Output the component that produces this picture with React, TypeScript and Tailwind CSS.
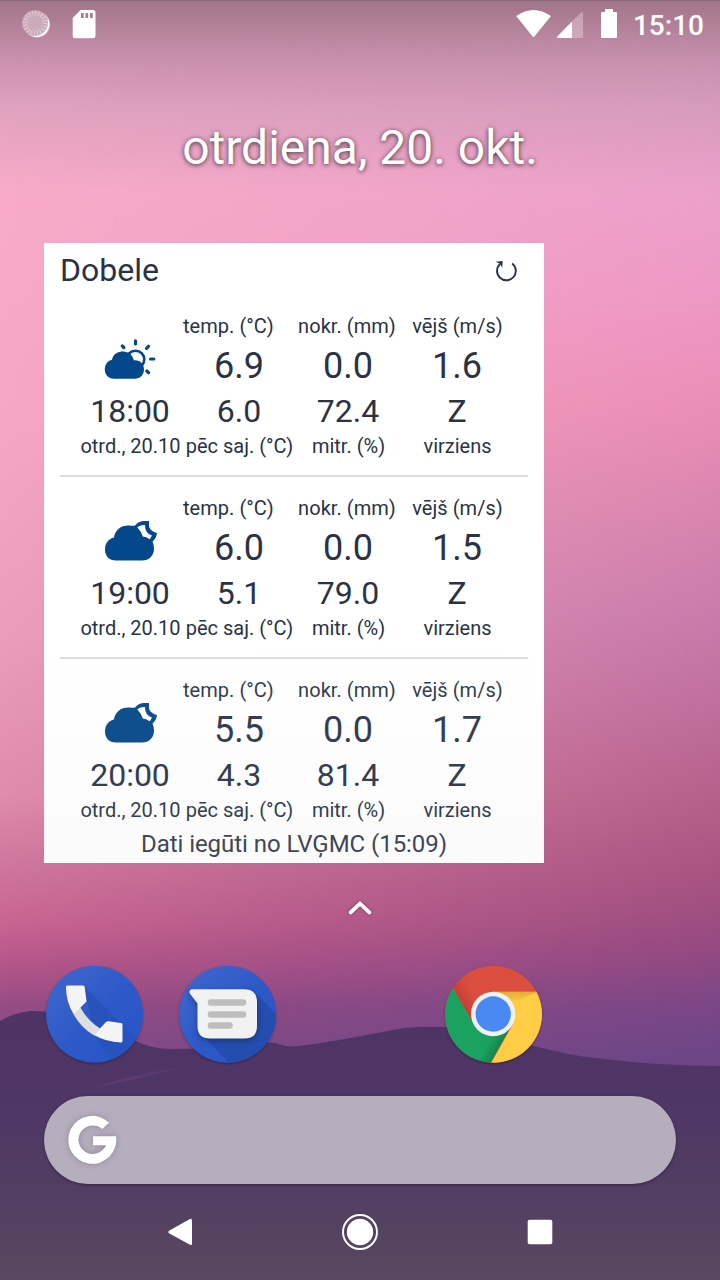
import React from "react";

type Forecast = {
  time: string;
  night: boolean;
  temp: string;
  feels: string;
  rain: string;
  humidity: string;
  wind: string;
  tone: string;
  iconTone: string;
};

const forecasts: Forecast[] = [
  { time: "18:00", night: false, temp: "6.9", feels: "6.0", rain: "0.0", humidity: "72.4", wind: "1.6", tone: "text-[#293345]", iconTone: "text-[#04478b]" },
  { time: "19:00", night: true, temp: "6.0", feels: "5.1", rain: "0.0", humidity: "79.0", wind: "1.5", tone: "text-[#293345]", iconTone: "text-[#04478b]" },
  { time: "20:00", night: true, temp: "5.5", feels: "4.3", rain: "0.0", humidity: "81.4", wind: "1.7", tone: "text-[#343e4e]", iconTone: "text-[#0f4f90]" },
];

function Wallpaper() {
  return (
    <svg className="absolute inset-0 h-full w-full" viewBox="0 0 720 1280">
      <defs>
        <linearGradient id="skyLeft" gradientUnits="userSpaceOnUse" x1="0" y1="0" x2="0" y2="1060">
          <stop offset="0" stopColor="#a17589" />
          <stop offset="0.057" stopColor="#cb91ae" />
          <stop offset="0.1" stopColor="#dfa2bf" />
          <stop offset="0.18" stopColor="#f8abc8" />
          <stop offset="0.4" stopColor="#f6a6c3" />
          <stop offset="0.6" stopColor="#eb9db9" />
          <stop offset="0.75" stopColor="#e08cab" />
          <stop offset="0.8" stopColor="#d27ca1" />
          <stop offset="0.87" stopColor="#c96591" />
          <stop offset="0.91" stopColor="#b4568a" />
          <stop offset="0.95" stopColor="#954c83" />
          <stop offset="1" stopColor="#824a88" />
        </linearGradient>
        <linearGradient id="skyRight" gradientUnits="userSpaceOnUse" x1="0" y1="0" x2="0" y2="1060">
          <stop offset="0" stopColor="#a17589" />
          <stop offset="0.057" stopColor="#c890ae" />
          <stop offset="0.1" stopColor="#d69bbb" />
          <stop offset="0.18" stopColor="#eba0ca" />
          <stop offset="0.28" stopColor="#ee98c4" />
          <stop offset="0.38" stopColor="#eb8eb7" />
          <stop offset="0.48" stopColor="#d985ae" />
          <stop offset="0.58" stopColor="#c87bab" />
          <stop offset="0.66" stopColor="#c06f9e" />
          <stop offset="0.75" stopColor="#b5608a" />
          <stop offset="0.82" stopColor="#a95482" />
          <stop offset="0.89" stopColor="#964a80" />
          <stop offset="0.95" stopColor="#7a4687" />
          <stop offset="1" stopColor="#6b4687" />
        </linearGradient>
        <linearGradient id="across" x1="0" y1="0" x2="1" y2="0">
          <stop offset="0" stopColor="#000" />
          <stop offset="1" stopColor="#fff" />
        </linearGradient>
        <mask id="rightFade">
          <rect width="720" height="1280" fill="url(#across)" />
        </mask>
        <linearGradient id="ground" gradientUnits="userSpaceOnUse" x1="0" y1="1010" x2="0" y2="1280">
          <stop offset="0" stopColor="#4e3464" />
          <stop offset="0.33" stopColor="#4e3666" />
          <stop offset="0.7" stopColor="#523f62" />
          <stop offset="1" stopColor="#5a4860" />
        </linearGradient>
      </defs>
      <rect width="720" height="1280" fill="url(#skyLeft)" />
      <rect width="720" height="1280" fill="url(#skyRight)" mask="url(#rightFade)" />
      <rect width="720" height="1" fill="#8a6679" />
      <path
        fill="url(#ground)"
        d="M0 1021 C12 1014 24 1011 34 1011 C70 1011 105 1027 138 1042 Q153 1049 170 1049 L235 1048 Q262 1041 276 1043 Q285 1047 294 1046.500 C335 1042 370 1034 404 1028 Q425 1026 446 1027 C490 1031 515 1042 544 1048.500 Q580 1057 600 1058.500 Q660 1066 720 1066 V1280 H0Z"
      />
      <path d="M90 1089 Q130 1074 180 1068 Q135 1080 90 1089Z" fill="#633d76" opacity=".7" />
    </svg>
  );
}

function StatusBar() {
  return (
    <header className="flex h-12 items-center justify-between pr-4 pl-5">
      <svg className="h-8 w-20" viewBox="20 8 80 32">
        <circle cx="37" cy="24.500" r="13" fill="#fff" fillOpacity=".55" />
        <path d="M47.500 17.500A13 13 0 0 1 31 36A14.500 14.500 0 0 0 47.500 17.500Z" fill="#fff" />
        <circle cx="35" cy="23" r="12.800" fill="#cbabba" />
        <circle cx="35" cy="23" r="10" fill="none" stroke="#fff" strokeOpacity=".4" strokeWidth="5" strokeDasharray="1.100 2.041" />
        <path d="M80.500 10H93Q95.500 10 95.500 12.500V36Q95.500 38.300 93 38.300H75Q72.700 38.300 72.700 36V18Z" fill="#fff" />
        <path d="M81 13h2.700v5H81zM85.500 13h2.700v5h-2.700zM90 13h2.700v5H90z" fill="#a77d92" />
      </svg>
      <div className="flex items-center">
        <svg className="h-8 w-[104px]" viewBox="515 8 104 32">
          <path d="M516.200 16Q525 10 533.500 10T551 16L534.700 36Q533.500 38 532.200 36Z" fill="#fff" />
          <path d="M583 13V37Q583 38 582 38H558Q556.500 37.500 557.500 36.200L581 12.500Q582.500 11.500 583 13Z" fill="#fff" fillOpacity=".3" />
          <path d="M572 21.500V38H558Q556.500 37.500 557.500 36.200Z" fill="#fff" />
          <path d="M605 9h8v3h3q1 0 1 1v24q0 1-1 1h-14q-1 0-1-1V13q0-1 1-1h3z" fill="#fff" />
        </svg>
        <span className="ml-[14px] pt-[3px] text-[28px] leading-8 font-medium text-white">15:10</span>
      </div>
    </header>
  );
}

function WeatherIcon({ night, tone }: { night: boolean; tone: string }) {
  return (
    <svg className={`h-[44px] w-[56px] ${tone}`} viewBox="102 337 56 44">
      {night ? (
        <>
          <path
            d="M116 378.500C109 378.500 105 374 105 367.500C105 361 109 356.500 114 355.500C115 348 121 343.500 128 343.500C132 343.500 134.500 344.200 135 343.500C138 340 141 339 144 339H149V341.500Q148.500 345 150.500 347.500Q153 350 157 351Q156.500 356 152.500 359.500Q154 363 154 366.500C154 374 149 378.500 142 378.500Z"
            fill="currentColor"
          />
          <path
            d="M137.300 345.300Q141 342.600 145 343Q144.800 347.500 147 350.200Q149 352.600 152 353.600Q151 355.800 149.500 357.200Q146.500 354.600 142.800 354.400Q141.200 349.500 137.300 345.300Z"
            fill="#fff"
          />
        </>
      ) : (
        <>
          <circle cx="135.500" cy="359.500" r="8.800" fill="#fff" stroke="currentColor" strokeWidth="2.600" />
          <path
            d="M135.500 340.800V344M146.500 348.300L148.500 346.300M150.500 359H153.800M146.800 371L148.600 372.700M122.300 346L123.900 347.600"
            stroke="currentColor"
            strokeWidth="3.200"
            strokeLinecap="round"
          />
          <path
            d="M114 378.700C108 378.700 104.800 374.500 104.800 369.500C104.800 364.500 108 360.500 112 359.800C113 354 118 351.500 123 351.500C129 351.500 133 355.500 133.800 360.300C140 359.500 144 364 144 369.500C144 375 140 378.700 135 378.700Z"
            fill="currentColor"
          />
        </>
      )}
    </svg>
  );
}

type MetricProps = { top: string; main: string; second: string; bottom: string; labelClass: string };

function Metric({ top, main, second, bottom, labelClass }: MetricProps) {
  return (
    <div className="flex w-[109px] flex-col items-center whitespace-nowrap">
      <span className={`text-[20px] leading-7 tracking-[0.05px] ${labelClass}`}>{top}</span>
      <span className="text-[36px] leading-[52px]">{main}</span>
      <span className="text-[32px] leading-[38px]">{second}</span>
      <span className="ml-[1px] text-[20px] leading-8">{bottom}</span>
    </div>
  );
}

function ForecastRow({ f }: { f: Forecast }) {
  return (
    <div className={`flex h-[150px] pl-[15.5px] ${f.tone}`}>
      <div className="flex w-[109px] flex-col items-center whitespace-nowrap">
        <div className="flex h-20 items-start pt-[25px]">
          <WeatherIcon night={f.night} tone={f.iconTone} />
        </div>
        <span className="text-[32px] leading-[38px]">{f.time}</span>
        <span className="ml-[1px] text-[20px] leading-8">otrd., 20.10</span>
      </div>
      <Metric top="temp. (°C)" main={f.temp} second={f.feels} bottom="pēc saj. (°C)" labelClass="-ml-[1.5px] self-start" />
      <Metric top="nokr. (mm)" main={f.rain} second={f.humidity} bottom="mitr. (%)" labelClass="mr-[2px]" />
      <Metric top="vējš (m/s)" main={f.wind} second="Z" bottom="virziens" labelClass="ml-[1px]" />
    </div>
  );
}

function WeatherWidget() {
  return (
    <section className="ml-11 flex h-[620px] w-[500px] flex-col bg-linear-to-b from-white from-65% to-[#fbfbfc] px-4">
      <div className="flex h-[54px] items-center justify-between pr-2 text-[#293345]">
        <h2 className="text-[32px] leading-[54px]">Dobele</h2>
        <svg className="mt-[2px] h-7 w-7" viewBox="492 257 28 28" fill="none" stroke="currentColor">
          <path d="M512.200 263.500A9.400 9.400 0 1 1 499.800 264.200" strokeWidth="1.900" />
          <path d="M495.500 261.800L502.700 261L502.200 268.200L500.800 264.800L498.500 266L499.500 263.500Z" fill="currentColor" stroke="none" />
        </svg>
      </div>
      <div className="flex flex-col pt-[15px]">
        {forecasts.map((f, i) => (
          <React.Fragment key={f.time}>
            {i > 0 && <div className="mt-[13px] mb-[17px] h-[2px] bg-[#dcdcdd]" />}
            <ForecastRow f={f} />
          </React.Fragment>
        ))}
      </div>
      <p className="mt-[2px] text-center text-[24px] leading-8 tracking-[-0.05px] text-[#3e4755]">Dati iegūti no LVĢMC (15:09)</p>
    </section>
  );
}

function PhoneIcon() {
  return (
    <svg className="h-[100px] w-[97px] drop-shadow-[0_1px_1px_rgba(0,0,0,.3)]" viewBox="46 966 97 100">
      <defs>
        <linearGradient id="blue" x1="0" y1="0" x2="1" y2="1">
          <stop offset="0" stopColor="#4168cc" />
          <stop offset=".55" stopColor="#2c58c8" />
          <stop offset="1" stopColor="#2855c6" />
        </linearGradient>
        <clipPath id="phoneClip"><circle cx="94.500" cy="1014.300" r="48.500" /></clipPath>
        <linearGradient id="phoneShade" x1="0" y1="0" x2="1" y2="1">
          <stop offset="0" stopColor="#1d439c" stopOpacity=".4" />
          <stop offset="1" stopColor="#2450b8" stopOpacity=".3" />
        </linearGradient>
      </defs>
      <circle cx="94.500" cy="1014.300" r="48.500" fill="url(#blue)" />
      <path clipPath="url(#phoneClip)" d="M84 986L143 1045L120 1070L95 1036L87 1002Z" fill="url(#phoneShade)" />
      <path d="M73 1013L80 1007Q87 1020 100 1028.500L94 1035.500Q80 1027 73 1013Z" fill="#dfdfdf" />
      <path d="M66 987Q66 985.500 67.500 985.500H83Q84.500 985.500 84.700 987L86.500 1001.500L80.500 1007.500L73.500 1014Q66 1002 66 987Z" fill="#f4f4f4" />
      <path d="M94 1035L99.500 1029L106 1022Q107 1021 108.500 1021.200L121 1023Q122.500 1023.200 122.500 1025V1041Q122.500 1042.500 121 1042.500Q106 1042 94 1035Z" fill="#f4f4f4" />
    </svg>
  );
}

function MessagesIcon() {
  return (
    <svg className="h-[100px] w-[97px] drop-shadow-[0_1px_1px_rgba(0,0,0,.3)]" viewBox="179 966 97 100">
      <defs>
        <clipPath id="msgClip"><circle cx="227.500" cy="1014.300" r="48.500" /></clipPath>
      </defs>
      <circle cx="227.500" cy="1014.300" r="48.500" fill="url(#blue)" />
      <path clipPath="url(#msgClip)" d="M254 992L290 1028L250 1085L201 1034Z" fill="#244daf" />
      <path
        className="drop-shadow-[0_2px_3px_rgba(0,0,0,.3)]"
        d="M192 989.300H244Q257 989.300 257 1002V1026Q257 1038.500 244.500 1038.500H210Q197.500 1038.500 197.500 1026V1003.500L189.800 993.500Q188.500 989.800 192 989.300Z"
        fill="#f2f2f2"
      />
      <path d="M211 1002.500H243M211 1014.500H243M211 1025.500H229.500" stroke="#bebebe" strokeWidth="6.600" strokeLinecap="round" />
    </svg>
  );
}

function ChromeIcon() {
  return (
    <svg className="h-[100px] w-[97px] drop-shadow-[0_1px_1px_rgba(0,0,0,.3)]" viewBox="445 966 97 100">
      <defs>
        <clipPath id="chromeClip"><circle cx="493.500" cy="1014.300" r="48.500" /></clipPath>
        <linearGradient id="redShade" gradientUnits="userSpaceOnUse" x1="462" y1="1004" x2="476" y2="996">
          <stop offset="0" stopColor="#a52a20" stopOpacity=".4" />
          <stop offset="1" stopColor="#a52a20" stopOpacity="0" />
        </linearGradient>
        <linearGradient id="greenShade" gradientUnits="userSpaceOnUse" x1="500" y1="1050" x2="487" y2="1043">
          <stop offset="0" stopColor="#0a5a30" stopOpacity=".45" />
          <stop offset="1" stopColor="#0a5a30" stopOpacity="0" />
        </linearGradient>
        <linearGradient id="yellowShade" gradientUnits="userSpaceOnUse" x1="0" y1="992" x2="0" y2="1003">
          <stop offset="0" stopColor="#b8801a" stopOpacity=".4" />
          <stop offset="1" stopColor="#b8801a" stopOpacity="0" />
        </linearGradient>
      </defs>
      <g clipPath="url(#chromeClip)">
        <rect x="445" y="965" width="98" height="99" fill="#db4e40" />
        <path d="M440 966L472 1021L500 1000L480 960Z" fill="url(#redShade)" />
        <path d="M440 966L453 988.500L472 1021L493.500 1030L510 1028L490 1064H440Z" fill="#1ba261" />
        <path d="M509.500 1029L490 1064H470L490 1030Z" fill="url(#greenShade)" />
        <path d="M493 991.700H545V1064H490.500L513 1024Z" fill="#fecd45" />
        <path d="M493 991.700H538L512 1003Z" fill="url(#yellowShade)" />
      </g>
      <circle cx="493.200" cy="1014" r="22.200" fill="#f1f1f1" />
      <circle cx="493.200" cy="1014" r="17.700" fill="#4a89f3" />
    </svg>
  );
}

function Dock() {
  return (
    <div className="mt-[46px] flex h-[100px] gap-9 pl-[46px]">
      <PhoneIcon />
      <MessagesIcon />
      <div className="w-[97px]" />
      <ChromeIcon />
    </div>
  );
}

function SearchBar() {
  return (
    <div className="mx-11 mt-[30px] flex h-[88px] items-center rounded-full bg-[#b6aebd] pl-[21px] shadow-[0_1px_3px_rgba(0,0,0,.4)]">
      <svg className="h-14 w-14 drop-shadow-[0_0_3px_rgba(90,70,100,.4)]" viewBox="65 1112 56 56">
        <path
          d="M109 1122.600A24 24 0 1 0 116 1136.200H93V1145.200H106A14.300 14.300 0 1 1 102.300 1129Z"
          fill="#fff"
        />
      </svg>
    </div>
  );
}

function NavBar() {
  return (
    <nav className="mt-auto flex h-24 items-center justify-center text-white">
      <div className="flex w-[180px] justify-center">
        <svg className="h-10 w-10" viewBox="160 1212 40 40">
          <path d="M169 1230.800L190 1219Q192 1218.300 192 1220.500V1243.500Q192 1245.700 190 1244.800L169 1233.200Q167.500 1232 169 1230.800Z" fill="currentColor" />
        </svg>
      </div>
      <div className="flex w-[180px] justify-center">
        <svg className="h-10 w-10" viewBox="0 0 40 40">
          <circle cx="20" cy="20" r="13.200" fill="currentColor" />
          <circle cx="20" cy="20" r="17" fill="none" stroke="currentColor" strokeWidth="1.900" />
        </svg>
      </div>
      <div className="flex w-[180px] justify-center">
        <svg className="h-10 w-10" viewBox="0 0 40 40">
          <rect x="7.700" y="7.700" width="24.600" height="24.600" rx="1.800" fill="currentColor" />
        </svg>
      </div>
    </nav>
  );
}

export default function App() {
  return (
    <main className="relative h-[1280px] w-[720px] overflow-hidden font-['Roboto',sans-serif]">
      <Wallpaper />
      <div className="relative flex h-full flex-col">
        <StatusBar />
        <h1 className="mt-[68px] mb-[63px] text-center text-[48px] leading-[64px] text-white [text-shadow:0_1px_5px_rgba(0,0,0,.75)]">
          otrdiena, 20. okt.
        </h1>
        <WeatherWidget />
        <div className="mt-[33px] flex h-6 justify-center">
          <svg className="h-6 w-8 drop-shadow-[0_0_1px_rgba(80,20,60,.8)]" viewBox="344 896 32 24" fill="none">
            <path d="M350.500 912.500L360 903.500L369.500 912.500" stroke="#fff" strokeWidth="3.800" strokeLinecap="round" />
          </svg>
        </div>
        <Dock />
        <SearchBar />
        <NavBar />
      </div>
    </main>
  );
}
